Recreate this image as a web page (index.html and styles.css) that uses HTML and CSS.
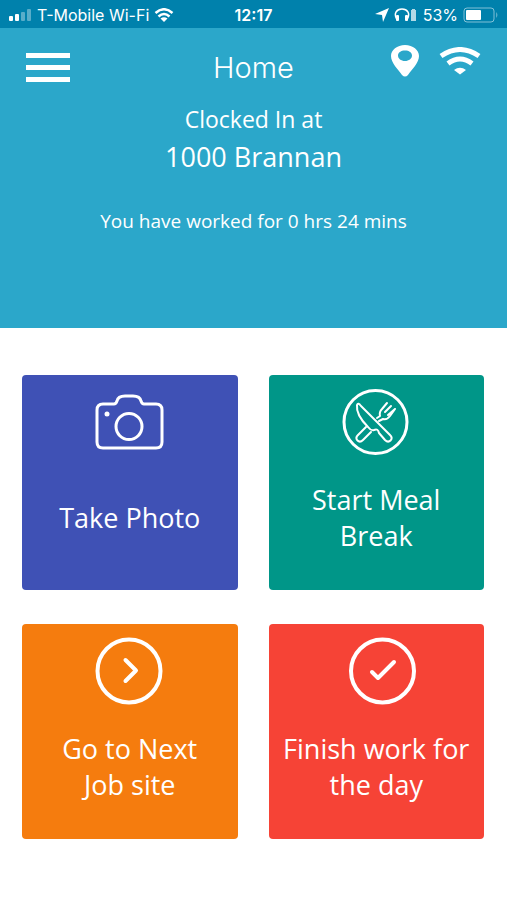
FILE: index.html
```html
<!DOCTYPE html>
<html lang="en">
<head>
<meta charset="utf-8">
<meta name="viewport" content="width=device-width, initial-scale=1">
<title>Home</title>
<link rel="stylesheet" href="styles.css">
</head>
<body>
<div class="status">
  <div class="status-side">
    <svg class="signal" width="24" height="14" viewBox="0 0 24 14" aria-hidden="true">
      <rect x="1" y="8" width="4" height="5" rx="1"/>
      <rect x="7" y="6" width="4" height="7" rx="1"/>
      <rect class="dim" x="13" y="4" width="4" height="9" rx="1"/>
      <rect class="dim" x="19" y="1" width="4" height="12" rx="1"/>
    </svg>
    <span>T-Mobile Wi-Fi</span>
    <svg width="20" height="14" viewBox="0 0 40 28" aria-hidden="true">
      <path d="M3 10Q20-5 37 10" fill="none" stroke="currentColor" stroke-width="5"/>
      <path d="M9 17Q20 7 31 17" fill="none" stroke="currentColor" stroke-width="5"/>
      <path d="M13 21Q20 16 27 21L20 28Z"/>
    </svg>
  </div>
  <span class="time">12:17</span>
  <div class="status-side status-right">
    <svg width="14" height="14" viewBox="0 0 14 14" aria-hidden="true"><path d="M14 0L8 14L7 7L0 6Z"/></svg>
    <svg class="headset" width="24" height="14" viewBox="0 0 24 14" aria-hidden="true">
      <path d="M3 12C-1 5 3 1 8 1S17 5 13 12" fill="none" stroke="currentColor" stroke-width="1.5"/>
      <rect x="2" y="7" width="3" height="6" rx="1"/><rect x="11" y="7" width="3" height="6" rx="1"/>
      <path class="soft" d="M18 1h3v1h1v11h-5V2h1z"/>
    </svg>
    <span>53%</span>
    <svg width="36" height="16" viewBox="0 0 36 16" aria-hidden="true">
      <rect class="soft-line" x="1" y="1" width="30" height="14" rx="3"/>
      <rect x="3" y="3" width="15" height="10" rx="1"/>
      <path class="dim" d="M33 5q3 3 0 6z"/>
    </svg>
  </div>
</div>
<header class="hero">
  <nav class="bar">
    <button class="icon-button" aria-label="Menu">
      <svg width="44" height="30" viewBox="0 0 44 30"><path d="M0 0h44v5H0zM0 12h44v5H0zM0 24h44v5H0z"/></svg>
    </button>
    <h1>Home</h1>
    <div class="bar-actions">
      <button class="icon-button" aria-label="Location">
        <svg width="28" height="32" viewBox="0 0 28 32"><path fill-rule="evenodd" d="M14 0C6 0 0 5 0 11C0 18 7 24 11 30Q14 33 17 30C21 24 28 18 28 11C28 5 22 0 14 0ZM14 5.500C18 5.500 21 7.500 21 10.500S18 16 14 16S7 13.500 7 10.500S10 5.500 14 5.500Z"/></svg>
      </button>
      <button class="icon-button" aria-label="Connection">
        <svg width="42" height="28" viewBox="0 0 42 28">
          <path d="M2 9Q21-4 40 9" fill="none" stroke="currentColor" stroke-width="5"/>
          <path d="M9 16.500Q21 7.500 33 16.500" fill="none" stroke="currentColor" stroke-width="5"/>
          <path d="M15 23Q21 18.500 27 23L21 27.500Z"/>
        </svg>
      </button>
    </div>
  </nav>
  <p class="state">Clocked In at</p>
  <p class="site">1000 Brannan</p>
  <p class="worked">You have worked for 0 hrs 24 mins</p>
</header>
<main class="tiles">
  <button class="tile photo">
    <svg class="tile-icon" viewBox="0 0 94 94" aria-hidden="true">
      <path d="M20 29H31Q33 29 34 26Q35 21 42 21H50Q57 21 58 26Q59 29 61 29H73Q79 29 79 35V67Q79 73 73 73H20Q14 73 14 67V35Q14 29 20 29Z"/>
      <circle cx="46" cy="51.500" r="13"/><circle class="solid" cx="24" cy="39" r="2.500"/>
    </svg>
    <span class="label">Take Photo</span>
  </button>
  <button class="tile meal">
    <svg class="tile-icon" viewBox="0 0 94 94" aria-hidden="true">
      <circle cx="46.500" cy="47" r="31.500"/>
      <g class="thin">
        <path d="M28 30Q29 27 32 31L61 60C65 64 60 69 56 65L50 58Q49 53 45 55Q42 56 39 52C32 45 27 38 28 30Z"/>
        <path d="M37 52L29 60C25 64 30 69 34 65L42 57"/>
        <path d="M48 43L51 41Q50 37 53 34L58 28M56 37L62 31M59 40L66 34M66 34L61 41Q58 45 54 44L50 46"/>
      </g>
    </svg>
    <span class="label">Start Meal<br>Break</span>
  </button>
  <button class="tile next">
    <svg class="tile-icon bold" viewBox="0 0 94 94" aria-hidden="true"><circle cx="46" cy="47" r="31.500"/><path d="M42.500 36L53 46.500L42.500 57"/></svg>
    <span class="label">Go to Next<br>Job site</span>
  </button>
  <button class="tile finish">
    <svg class="tile-icon bold" viewBox="0 0 94 94" aria-hidden="true"><circle cx="53.500" cy="47" r="31.500"/><path d="M43 48L49 54L65 38"/></svg>
    <span class="label">Finish work for the day</span>
  </button>
</main>
</body>
</html>
```

FILE: styles.css
```css
* { box-sizing: border-box; }
body {
  margin: 0;
  background: #fff;
  color: #fff;
  font-family: "Open Sans", "Noto Sans", sans-serif;
}
svg { display: block; fill: currentColor; flex: none; }
h1, p { margin: 0; font-weight: 400; }
button {
  border: 0;
  padding: 0;
  background: none;
  color: inherit;
  font: inherit;
  cursor: pointer;
}

.status {
  display: grid;
  grid-template-columns: 1fr auto 1fr;
  align-items: center;
  height: 28px;
  padding: 2px 8px 0;
  background: #0081ac;
  font: 16px/24px Inter, sans-serif;
}
.status-side { display: flex; align-items: center; gap: 5px; white-space: nowrap; }
.status-right { justify-content: flex-end; }
.time { font-weight: 600; }
.dim { opacity: 0.35; }
.soft { opacity: 0.7; }
.soft-line { fill: none; stroke: currentColor; opacity: 0.5; }

.hero {
  height: 300px;
  background: #2ba7ca;
  text-align: center;
}
.bar {
  display: grid;
  grid-template-columns: 1fr auto 1fr;
  align-items: center;
  height: 72px;
  padding: 8px 26px 0;
}
h1 { font: 300 29px/40px Inter, sans-serif; }
.bar-actions {
  display: flex;
  justify-content: flex-end;
  gap: 20px;
  padding-bottom: 14px;
}
.state { font-size: 23px; line-height: 38px; }
.site { font-size: 27px; line-height: 38px; }
.worked { padding-top: 28px; font-size: 19px; line-height: 34px; }

.tiles {
  display: grid;
  grid-template-columns: 1fr 1fr;
  gap: 34px 31px;
  padding: 47px 23px 47px 22px;
}
.tile {
  display: flex;
  flex-direction: column;
  align-items: center;
  min-height: 215px;
  border-radius: 4px;
}
.photo { background: #3f51b5; }
.meal { background: #009688; }
.next { background: #f57c0e; }
.finish { background: #f64336; }
.label {
  display: flex;
  flex-direction: column;
  justify-content: center;
  min-height: 98px;
  font-size: 27px;
  line-height: 36px;
}
.tile-icon {
  width: 94px;
  height: 94px;
  fill: none;
  stroke: currentColor;
  stroke-width: 3;
  stroke-linejoin: round;
  stroke-linecap: round;
}
.bold { stroke-width: 4; }
.thin { stroke-width: 2; }
.solid { fill: currentColor; stroke: none; }
```
